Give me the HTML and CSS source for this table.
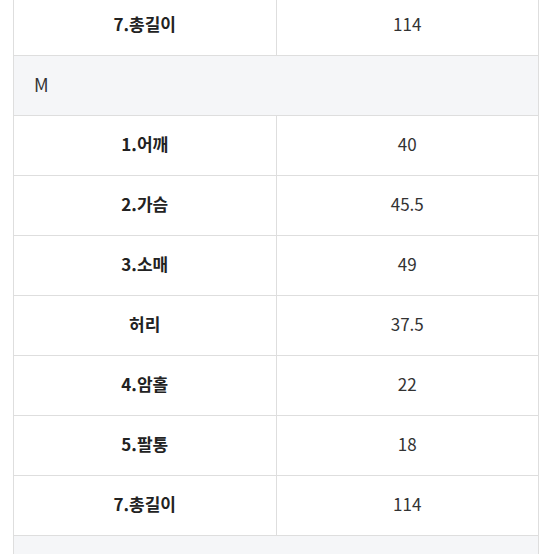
FILE: index.html
```html
<!DOCTYPE html>
<html lang="ko">
<head>
<meta charset="utf-8">
<link rel="stylesheet" href="styles.css">
</head>
<body>
<div class="wrap">
<table class="size">
<tbody>
<tr><th>7.총길이</th><td>114</td></tr>
<tr class="group"><td colspan="2">M</td></tr>
<tr><th>1.어깨</th><td>40</td></tr>
<tr><th>2.가슴</th><td>45.5</td></tr>
<tr><th>3.소매</th><td>49</td></tr>
<tr><th>허리</th><td>37.5</td></tr>
<tr><th>4.암홀</th><td>22</td></tr>
<tr><th>5.팔통</th><td>18</td></tr>
<tr><th>7.총길이</th><td>114</td></tr>
<tr class="group"><td colspan="2"></td></tr>
</tbody>
</table>
</div>
</body>
</html>
```

FILE: styles.css
```css
html, body {
  margin: 0;
  padding: 0;
  background: #fff;
  overflow: hidden;
}
.wrap {
  padding: 0 15px 0 13px;
  margin-top: -5px;
}
.size {
  width: 526px;
  border-collapse: collapse;
  table-layout: fixed;
  font-family: "Noto Sans CJK KR", "Noto Sans", sans-serif;
  font-size: 17px;
  color: #2b2b2b;
}
.size th, .size td {
  border: 1px solid #dedede;
  height: 60px;
  padding: 0 0 3px;
  text-align: center;
  vertical-align: middle;
  box-sizing: border-box;
  line-height: 20px;
}
.size th {
  width: 50%;
  font-weight: 700;
  color: #222;
}
.size td {
  font-weight: 400;
  color: #333;
}
.size .group td {
  background: #f5f6f8;
  text-align: left;
  padding-left: 20px;
  font-size: 18px;
  color: #333;
}
```
